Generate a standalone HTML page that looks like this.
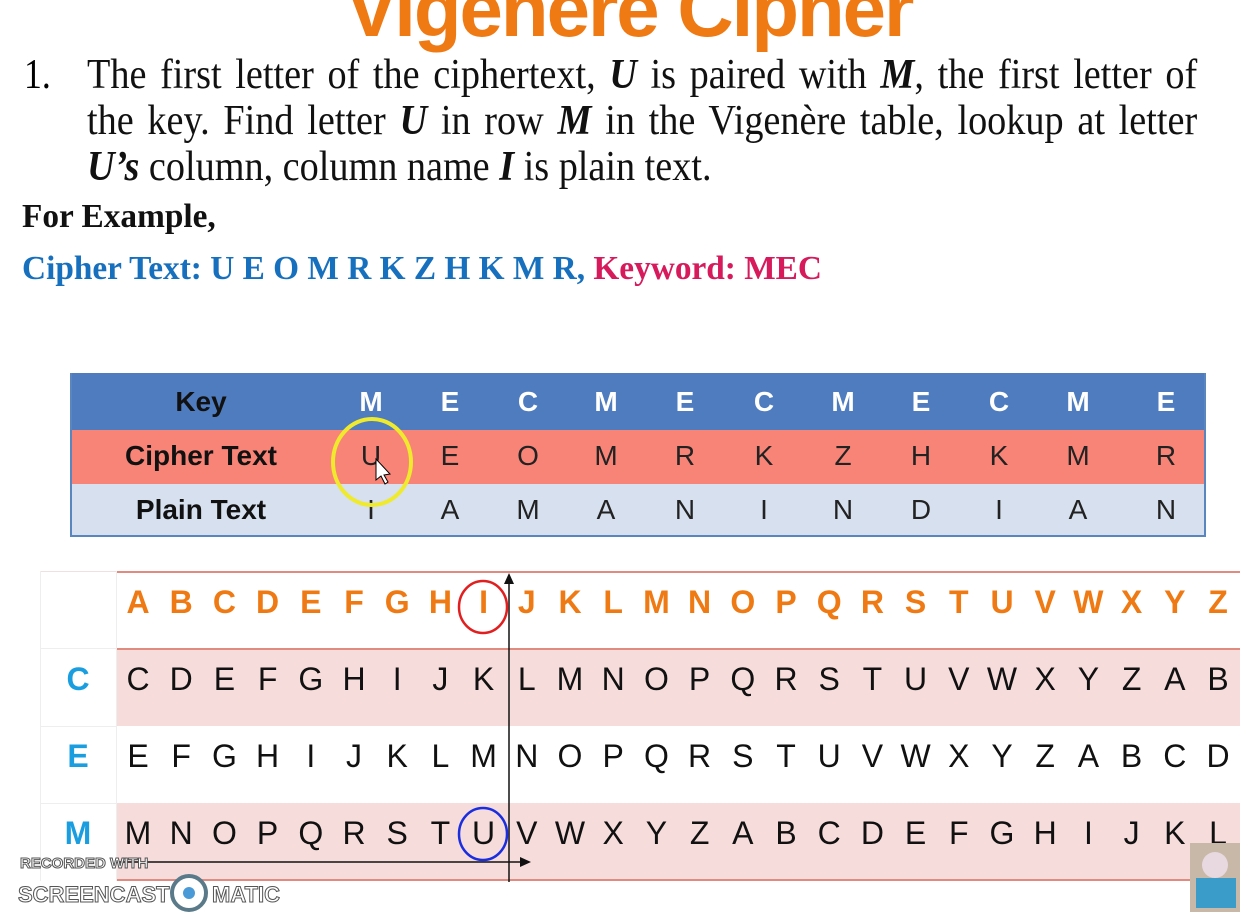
<!DOCTYPE html>
<html><head><meta charset="utf-8"><style>
body{margin:0;width:1254px;height:912px;background:#fff;position:relative;overflow:hidden;font-family:"Liberation Sans",sans-serif}
.a{position:absolute}
.title{left:0;width:1258px;text-align:center;top:-36px;font:bold 78px "Liberation Sans",sans-serif;color:#ef7a14;letter-spacing:-2px}
.ln{position:absolute;left:87px;width:1110px;font:42px/46px "Liberation Serif",serif;color:#111;white-space:nowrap}
.ln span.in{display:inline-block;transform:scaleX(0.91);transform-origin:0 0;width:1220px;text-align:justify;text-align-last:justify;white-space:normal}
.num{left:24px;top:52px;font:42px/46px "Liberation Serif",serif;transform:scaleX(0.85);transform-origin:0 0}
.c{position:absolute;text-align:center;transform:translateX(-50%)}
.ser{font-family:"Liberation Serif",serif;font-weight:bold;white-space:nowrap;transform:scaleX(0.98);transform-origin:0 0}
</style></head><body>
<div class="a title">Vigenere Cipher</div>
<div class="a num">1.</div>
<div class="ln" style="top:52px"><span class="in">The first letter of the ciphertext, <b><i>U</i></b> is paired with <b><i>M</i></b>, the first letter of</span></div>
<div class="ln" style="top:98px"><span class="in">the key. Find letter <b><i>U</i></b> in row <b><i>M</i></b> in the Vigenère table, lookup at letter</span></div>
<div class="ln" style="top:144px"><span class="in" style="text-align-last:left"><b><i>U’s</i></b> column, column name <b><i>I</i></b> is plain text.</span></div>
<div class="a ser" style="left:22px;top:198px;font-size:34px;color:#111">For Example,</div>
<div class="a ser" style="left:22px;top:250px;font-size:34px;color:#1670bd">Cipher Text: U E O M R K Z H K M R, <span style="color:#d61a5c">Keyword: MEC</span></div>

<div class="a" style="left:70px;top:373px;width:1136px;height:57px;background:#4e7cbf"></div>
<div class="a" style="left:70px;top:430px;width:1136px;height:54px;background:#f88478"></div>
<div class="a" style="left:70px;top:484px;width:1136px;height:53px;background:#d6e0ef;border-bottom:2px solid #5a86c0;box-sizing:border-box"></div>
<div class="a" style="left:70px;top:373px;width:2px;height:164px;background:#5a86c0"></div>
<div class="a" style="left:1204px;top:373px;width:2px;height:164px;background:#5a86c0"></div>
<div id="t1"></div>

<div class="a" style="left:40px;top:571px;width:1200px;height:1px;background:#f0e0e0"></div>
<div class="a" style="left:117px;top:571px;width:1123px;height:2px;background:#e08a80"></div>
<div class="a" style="left:117px;top:648px;width:1123px;height:78px;background:#f6dcdb;border-top:2px solid #e08a80;box-sizing:border-box"></div>
<div class="a" style="left:117px;top:803px;width:1123px;height:78px;background:#f6dcdb;border-bottom:2px solid #e08a80;box-sizing:border-box"></div>
<div class="a" style="left:40px;top:571px;width:1px;height:310px;background:#eee"></div>
<div class="a" style="left:116px;top:571px;width:1px;height:310px;background:#eee"></div>
<div class="a" style="left:40px;top:648px;width:77px;height:1px;background:#eee"></div>
<div class="a" style="left:40px;top:726px;width:77px;height:1px;background:#eee"></div>
<div class="a" style="left:40px;top:803px;width:77px;height:1px;background:#eee"></div>
<div id="t2"></div>

<svg class="a" style="left:0;top:0" width="1254" height="912">
<line x1="509" y1="582" x2="509" y2="882" stroke="#111" stroke-width="1.5"/>
<path d="M504 584 L509 573 L514 584Z" fill="#111"/>
<line x1="115" y1="862" x2="522" y2="862" stroke="#111" stroke-width="1.5"/>
<path d="M520 857 L531 862 L520 867Z" fill="#111"/>
<ellipse cx="372" cy="462" rx="39" ry="43" fill="none" stroke="#f0ea2c" stroke-width="4"/>
<ellipse cx="483" cy="607" rx="24" ry="26" fill="none" stroke="#e21f1f" stroke-width="2.5"/>
<ellipse cx="483" cy="834" rx="24" ry="26" fill="none" stroke="#1a2ee0" stroke-width="2.5"/>
<path d="M376 459 L376 480 L381 476 L385 484 L388 482 L384 475 L390 474Z" fill="#fff" stroke="#000" stroke-width="1"/>
<circle cx="189" cy="893" r="17" fill="#fff" stroke="#5a7a8a" stroke-width="4"/>
<circle cx="189" cy="893" r="6" fill="#4a9ad8"/>
<text x="20" y="868" font-family="Liberation Sans" font-weight="bold" font-size="15" fill="#fff" stroke="#555" stroke-width="1">RECORDED WITH</text>
<text x="18" y="902" font-family="Liberation Sans" font-weight="bold" font-size="22" fill="#fff" stroke="#555" stroke-width="1">SCREENCAST</text>
<text x="212" y="902" font-family="Liberation Sans" font-weight="bold" font-size="22" fill="#fff" stroke="#555" stroke-width="1">MATIC</text>
<rect x="1190" y="843" width="50" height="69" fill="#c8b8a8"/>
<circle cx="1215" cy="865" r="13" fill="#e8d8e0"/>
<rect x="1196" y="878" width="40" height="30" fill="#3a9cc8"/>
</svg>
<script>
var h='';
var keys='MECMECMECME',ct='UEOMRKZHKMR',pt='IAMANINDIAN';
var xs=[371,450,528,606,685,764,843,921,999,1078,1166];
function cell(x,y,t,s){return '<div class="c" style="left:'+x+'px;top:'+y+'px;'+s+'">'+t+'</div>';}
h+=cell(201,386,'Key','font:bold 28px Liberation Sans;color:#111');
h+=cell(201,440,'Cipher Text','font:bold 28px Liberation Sans;color:#111');
h+=cell(201,494,'Plain Text','font:bold 28px Liberation Sans;color:#111');
for(var i=0;i<11;i++){h+=cell(xs[i],386,keys[i],'font:bold 28px Liberation Sans;color:#fff');
h+=cell(xs[i],440,ct[i],'font:28px Liberation Sans;color:#222');
h+=cell(xs[i],494,pt[i],'font:28px Liberation Sans;color:#222');}
document.getElementById('t1').innerHTML=h;
h='';var A='ABCDEFGHIJKLMNOPQRSTUVWXYZ';
function row(off,y,st){for(var i=0;i<26;i++){h+=cell(138+i*43.2,y,A[(i+off)%26],st);}}
row(0,584,'font:bold 32px Liberation Sans;color:#ef7a14');
row(2,661,'font:32px Liberation Sans;color:#111');
row(4,738,'font:32px Liberation Sans;color:#111');
row(12,815,'font:32px Liberation Sans;color:#111');
h+=cell(78,661,'C','font:bold 32px Liberation Sans;color:#1a9ee0');
h+=cell(78,738,'E','font:bold 32px Liberation Sans;color:#1a9ee0');
h+=cell(78,815,'M','font:bold 32px Liberation Sans;color:#1a9ee0');
document.getElementById('t2').innerHTML=h;
</script>
</body></html>
